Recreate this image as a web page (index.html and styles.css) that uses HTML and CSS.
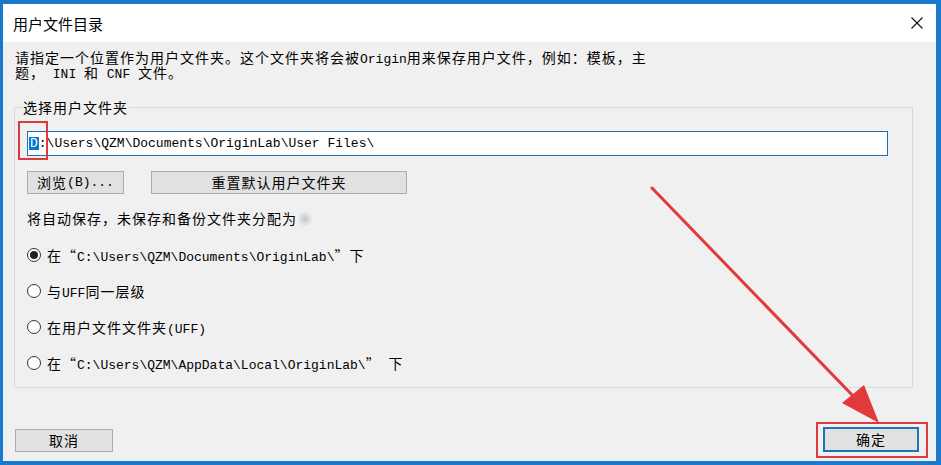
FILE: index.html
```html
<!DOCTYPE html>
<html lang="zh-CN">
<head>
<meta charset="utf-8">
<title>用户文件目录</title>
<link rel="stylesheet" href="styles.css">
</head>
<body>
<div class="window">
  <div class="titlebar">
    <span class="title">用户文件目录</span>
    <svg class="close" width="12" height="12" viewBox="0 0 12 12"><path d="M0.5 0.5L11.5 11.5M11.5 0.5L0.5 11.5" stroke="#111" stroke-width="1.1" fill="none"/></svg>
  </div>
  <div class="content">
    <div class="desc">
      <div class="line">请指定一个位置作为用户文件夹。这个文件夹将会被<span class="m">Origin</span>用来保存用户文件，例如：模板，主</div>
      <div class="line">题，<span class="m"> INI </span>和<span class="m"> CNF </span>文件。</div>
    </div>
    <div class="group">
      <span class="legend">选择用户文件夹</span>
      <div class="field"><span class="m"><span class="sel">D</span>:\Users\QZM\Documents\OriginLab\User Files\</span></div>
      <div class="btns">
        <div class="btn browse">浏览<span class="m">(B)...</span></div>
        <div class="btn reset">重置默认用户文件夹</div>
      </div>
      <p class="note">将自动保存，未保存和备份文件夹分配为<span class="smudge"></span></p>
      <div class="radios">
        <div class="radio"><span class="dot checked"></span><span class="lbl">在“<span class="m">C:\Users\QZM\Documents\OriginLab\</span>”下</span></div>
        <div class="radio"><span class="dot"></span><span class="lbl">与<span class="m">UFF</span>同一层级</span></div>
        <div class="radio"><span class="dot"></span><span class="lbl">在用户文件文件夹<span class="m">(UFF)</span></span></div>
        <div class="radio"><span class="dot"></span><span class="lbl">在“<span class="m">C:\Users\QZM\AppData\Local\OriginLab\</span>”<span class="m"> </span>下</span></div>
      </div>
    </div>
    <div class="footer">
      <div class="btn cancel">取消</div>
      <div class="btn ok">确定</div>
    </div>
  </div>
</div>
<div class="mark mark-d"></div>
<div class="mark mark-ok"></div>
<svg class="arrow" width="941" height="465" viewBox="0 0 941 465">
  <line x1="652" y1="188" x2="856" y2="399" stroke="#e2393b" stroke-width="3" stroke-linecap="round"/>
  <polygon points="842,403 864,385 879,423" fill="#e2393b"/>
</svg>
</body>
</html>
```

FILE: styles.css
```css
* { box-sizing: border-box; }
html, body { margin: 0; padding: 0; }
body {
  position: relative;
  width: 941px;
  height: 465px;
  overflow: hidden;
  background: #1b78c8;
  font-family: "Noto Sans CJK SC", sans-serif;
  color: #000;
}
.window {
  width: 941px;
  height: 465px;
  border-style: solid;
  border-color: #1a79ca;
  border-width: 4px 5px 4px 3px;
  display: flex;
  flex-direction: column;
}
.titlebar {
  height: 38px;
  flex: none;
  background: #fff;
  display: flex;
  align-items: center;
  justify-content: space-between;
  padding: 0 13px 0 10px;
}
.title { font-size: 15px; line-height: 1; }
.close { display: block; }
.content {
  flex: 1;
  background: #f0f0f0;
  display: flex;
  flex-direction: column;
  font-size: 14px;
  letter-spacing: 1px;
  line-height: 15px;
}
.m {
  font-family: "Liberation Mono", monospace;
  font-size: 13px;
  letter-spacing: 0;
  line-height: 8px;
}
.desc {
  margin: 8px 0 0 12px;
  white-space: nowrap;
}
.line {
  height: 15px;
  line-height: 15px;
}
.group {
  margin: 27px 0 0 11px;
  width: 899px;
  border: 1px solid #dadada;
  padding: 0 0 6px 12px;
}
.legend {
  display: block;
  width: max-content;
  height: 15px;
  margin: -8px 0 0 -5px;
  padding: 0 1px;
  background: #f0f0f0;
  line-height: 15px;
}
.field {
  margin-top: 16px;
  width: 861px;
  height: 25px;
  background: #fff;
  border: 1px solid #1f6fae;
  display: flex;
  align-items: center;
  padding-left: 1px;
  white-space: nowrap;
}
.field .m { line-height: 13px; }
.sel {
  background: #0078d7;
  color: #fff;
  display: inline-block;
  line-height: 13px;
  padding: 0 1px 0 1px;
}
.btns {
  margin-top: 15px;
  display: flex;
  gap: 27px;
}
.btn {
  height: 23px;
  background: #e1e1e1;
  border: 1px solid #adadad;
  display: flex;
  align-items: center;
  justify-content: center;
  white-space: nowrap;
}
.browse { width: 97px; }
.reset { width: 256px; }
.note {
  margin: 16px 0 0 0;
  height: 17px;
  line-height: 17px;
  white-space: nowrap;
  display: flex;
  align-items: center;
}
.smudge {
  display: inline-block;
  width: 16px;
  height: 14px;
  border-radius: 50%;
  background: radial-gradient(circle, #c4c4c4 0%, #dcdcdc 40%, rgba(240,240,240,0) 75%);
}
.radios {
  margin-top: 10px;
  display: flex;
  flex-direction: column;
}
.radio {
  height: 36px;
  display: flex;
  align-items: center;
  gap: 6px;
  white-space: nowrap;
}
.lbl { line-height: 15px; }
.dot {
  width: 14px;
  height: 14px;
  flex: none;
  border: 1px solid #333;
  border-radius: 50%;
  background: #fff;
  display: flex;
  align-items: center;
  justify-content: center;
}
.dot.checked::after {
  content: "";
  width: 8px;
  height: 8px;
  border-radius: 50%;
  background: #222;
}
.footer {
  margin-top: auto;
  display: flex;
  justify-content: space-between;
  align-items: flex-end;
  padding: 0 17px 9px 12px;
}
.cancel { width: 98px; }
.ok {
  width: 96px;
  height: 25px;
  border: 2px solid #1f74b8;
}
.mark {
  position: absolute;
  border: 2px solid #dc3a3e;
}
.mark-d { left: 18px; top: 121px; width: 30px; height: 39px; }
.mark-ok { left: 816px; top: 422px; width: 112px; height: 36px; }
.arrow {
  position: absolute;
  left: 0;
  top: 0;
  pointer-events: none;
}
```
